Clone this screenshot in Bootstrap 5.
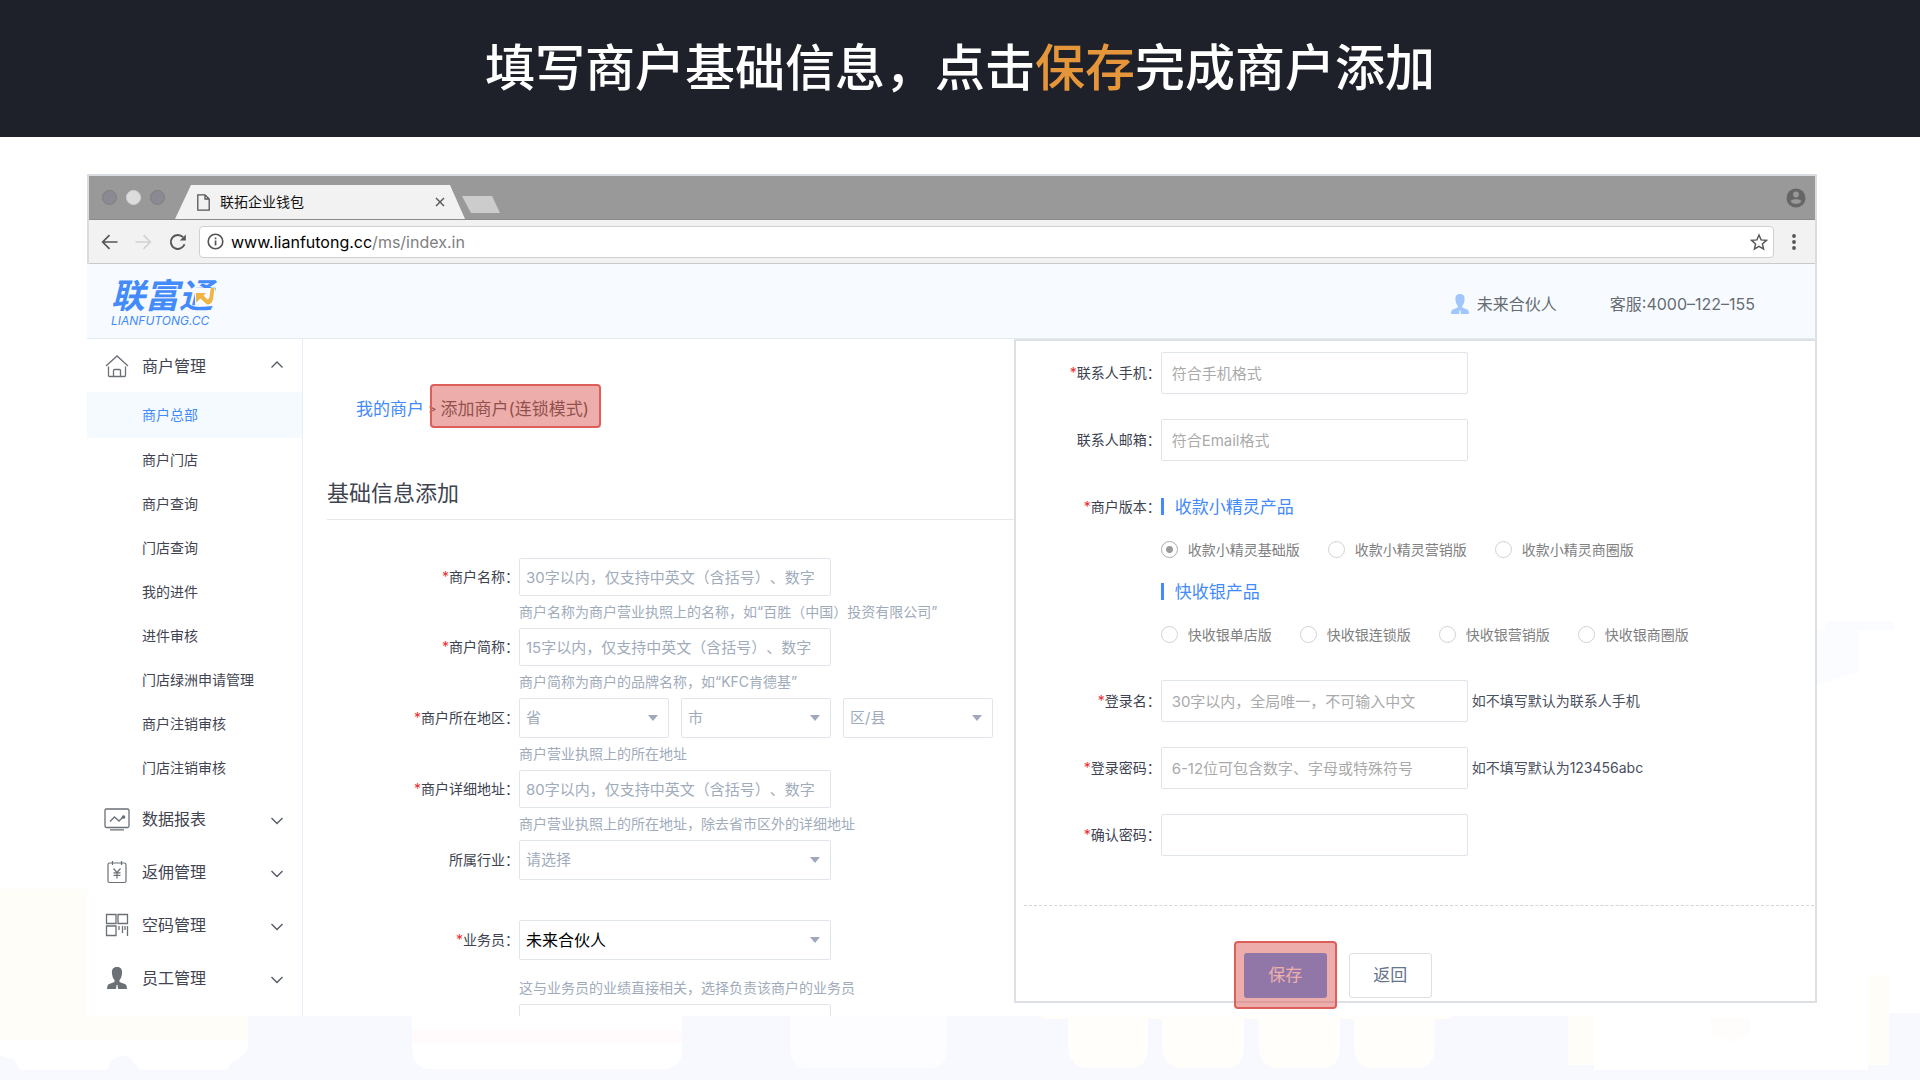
<!DOCTYPE html>
<html lang="zh-CN">
<head>
<meta charset="utf-8">
<meta name="viewport" content="width=device-width, initial-scale=1">
<title>联拓企业钱包</title>
<link href="https://cdn.jsdelivr.net/npm/bootstrap@5.3.0/dist/css/bootstrap.min.css" rel="stylesheet">
<style>
  :root { --brand: #438afa; --line: #e0e4eb; --ink: #3f4450; --hint: #a0abbb; }
  body { font-family: Inter, "Noto Sans CJK SC", sans-serif; font-size: 14px; line-height: 20px; color: var(--ink); background: #fff; text-spacing-trim: space-all; }
  a { text-decoration: none; }
  .backdrop { inset: 0; z-index: -1; }
  .slide-head { height: 137px; padding-bottom: 2px; background: #1f212a; }
  .slide-title { font-size: 50px; line-height: 64px; font-weight: 500; }
  .slide-title em { font-style: normal; color: #e5953a; }

  .browser { margin: 37px 103px 0 87px; }
  .chrome { border: 2px solid #d9dce0; border-bottom: 0; }
  .tabstrip { height: 44px; background: #999; border-bottom: 1px solid #8a8a8a; padding-left: 13px; }
  .lights { gap: 9px; padding-top: 14px; }
  .dot { width: 15px; height: 15px; border-radius: 50%; background: #8b8991; border: 1px solid #7f7e85; }
  .dot-on { background: #dcdcdc; border-color: #d2d2d2; }
  .tab { width: 290px; height: 34px; margin: 9px 0 -1px 10px; background: #f2f2f2; clip-path: polygon(16px 0, 275px 0, 290px 100%, 0 100%); color: #111; padding: 0 20px 0 22px; }
  .tab button { border: 0; background: none; padding: 0; line-height: 0; }
  .tab-name { margin-left: 10px; }
  .newtab { width: 38px; height: 17px; margin: 20px 0 0 -3px; background: #ccc; clip-path: polygon(0 0, 30px 0, 100% 100%, 9px 100%); }
  .toolbar { height: 44px; background: #f2f2f2; border-bottom: 1px solid #c8c9cc; padding: 0 15px 0 12px; }
  .toolbar button { border: 0; background: none; padding: 0; margin-right: 17px; line-height: 0; }
  .toolbar .reload { margin-right: 12px; }
  .addr { height: 32px; background: #fff; border: 1px solid #d0d0d0; border-radius: 4px; padding: 0 5px 0 7px; margin-right: 14px; font-size: 16px; color: #808080; }
  .addr b { font-weight: 400; color: #000; }
  .addr-icon { margin-right: 7px; }

  .apphead { height: 75px; background: #f7fbff; border-bottom: 1px solid #e4ecf3; border-right: 2px solid #dcdfe3; padding: 6px 60px 0 24px; font-size: 16px; color: #666c73; }
  .logo { color: var(--brand); }
  .logo-cn { font-size: 34px; line-height: 34px; font-weight: 700; font-style: italic; }
  .logo-en { font-size: 12px; line-height: 16px; font-style: italic; }
  .logo-arrow { right: -2px; top: 9px; }
  .user { margin-right: 53px; }

  .work { height: calc(100vh - 403px); background: #fff; overflow: visible; }
  .side { width: 216px; flex: none; border-right: 1px solid #e5edf5; overflow: hidden; }
  .grp { height: 53px; padding: 0 19px 0 17px; font-size: 16px; color: var(--ink); }
  .grp-label { margin-left: 12px; }
  .side ul { margin: 0 0 2px; }
  .sub { height: 44px; line-height: 44px; padding-left: 55px; color: var(--ink); }
  .sub.on { height: 46px; line-height: 46px; background: #f5faff; color: var(--brand); }

  .left-pane { flex: 713 1 0; overflow: hidden; }
  .crumbs { margin: 57px 0 0 53px; font-size: 17px; line-height: 26px; color: #444; }
  .crumbs a { color: var(--brand); }
  .crumbs .sep { font-size: 13px; margin: 0 4px; }
  .marked::after { content: ""; position: absolute; inset: var(--mark-inset); background: rgba(219,94,88,.5); border: 2px solid #dc6059; border-radius: 4px; pointer-events: none; }
  .crumbs .marked { --mark-inset: -12px -12px -6px -11px; }
  .sect { margin: 55px 0 38px 24px; padding-bottom: 10px; font-size: 22px; line-height: 32px; font-weight: 400; border-bottom: 1px solid #e8e8e8; }
  .lab { flex: none; text-align: right; color: #3d4250; }
  .lab i { font-style: normal; color: #f02c2c; }
  .left-pane .lab { width: 216px; }
  .fields { width: 312px; gap: 12px; }
  .box { height: 38px; padding: 0 4px 0 6px; border: 1px solid var(--line); border-radius: 2px; font-size: 15px; color: #000; background-color: #fff; }
  .box::placeholder { color: var(--hint); opacity: 1; }
  select.box { height: 40px; color: var(--hint); appearance: none; background: #fff url("data:image/svg+xml,%3Csvg xmlns='http://www.w3.org/2000/svg' viewBox='0 0 10 6'%3E%3Cpath d='M0 0h10L5 6z' fill='%239fa9ba'/%3E%3C/svg%3E") no-repeat right 10px center / 10px 6px; }
  select.box.chosen { color: #000; font-size: 16px; }
  .region { flex: none; width: 150px; }
  .help { margin-left: 216px; height: 32px; line-height: 32px; color: var(--hint); white-space: nowrap; }

  .right-pane { flex: 801 1 0; align-self: flex-start; border: 2px solid #dcdfe3; padding: 11px 1px 3px 0; }
  .right-pane .lab { width: 145px; }
  .right-pane .frow { margin-bottom: 25px; }
  .right-pane .box { width: 307px; height: 42px; padding-left: 10px; }
  .right-pane .box::placeholder { color: #aaa; }
  .pick { height: 42px; }
  .picks { height: 43px; margin-left: 145px; gap: 28px; color: #808080; }
  .picks label { gap: 10px; }
  .picks input { appearance: none; width: 17px; height: 17px; margin: 0; border: 1px solid #d2d2d2; border-radius: 50%; background: #fff; }
  .picks input:checked { border-color: #aaa; background: radial-gradient(circle, #999 0 3px, #fff 4px); }
  .prod { font-size: 17px; font-weight: 400; margin: 0; color: var(--brand); }
  .prod::before { content: ""; width: 3px; height: 17px; background: var(--brand); margin-right: 11px; }
  .side-hint { margin-left: 4px; color: #4a5060; }
  .rule { border-top: 1px dashed #d4d6da; margin: 49px 0 47px 8px; }
  .acts { margin-left: 228px; gap: 22px; }
  .act { width: 83px; height: 45px; border-radius: 3px; font-size: 17px; padding: 0; }
  .act-save, .act-save:hover { background: #478ef8; color: #fff; }
  .act-back { border: 1px solid #dcdfe3; color: #66758a; background: #fff; }
  .acts .marked { --mark-inset: -12px -10px -11px -10px; }
</style>
</head>
<body class="position-relative min-vh-100">

<svg class="backdrop position-absolute w-100 h-100" viewBox="0 0 1920 1080" preserveAspectRatio="none" aria-hidden="true">
  <path d="M0 1013H1920V1080H0Z" fill="#f8f9fe"/>
  <path d="M0 889H248V1040H0Z" fill="#fffdf8"/>
  <path d="M0 1040H248V1048Q246 1056 232 1062L227 1070H140L130 1058 123 1055 112 1060 107 1070H20L14 1059 0 1056Z" fill="#fff"/>
  <path d="M412 1010H682V1050Q682 1068 664 1069H430Q413 1068 412 1050Z" fill="#fff"/>
  <path d="M412 1030H682V1043H412Z" fill="#fffbfc"/>
  <path d="M790 1010H947V1050Q946 1067 930 1068H806Q790 1066 790 1048Z" fill="#fdfdff"/>
  <path d="M1040 1014H1455L1450 1019H1044Z M1068 1018H1148V1050Q1146 1067 1132 1068H1086Q1070 1066 1068 1048Z M1162 1018H1244V1050Q1242 1067 1228 1068H1180Q1164 1066 1162 1048Z M1259 1018H1340V1050Q1338 1067 1324 1068H1276Q1260 1066 1259 1048Z M1354 1018H1435V1050Q1433 1067 1419 1068H1370Q1355 1066 1354 1048Z" fill="#fffefa"/>
  <path d="M1594 1010H1868V1070H1594Z" fill="#fff"/>
  <path d="M1568 1014H1594V1065H1568Z M1868 975H1889V1065H1868Z" fill="#fffdf8"/>
  <path d="M1889 975H1920V1013H1889Z" fill="#fff"/>
  <path d="M1709 1018L1750 1018 1750 1030 1744 1038 1735 1040 1731 1042 1722 1038 1713 1036Z" fill="#fffdfc"/>
  <path d="M1817 630H1858V672L1817 685Z M1826 621H1894V630H1826Z" fill="#fafcff"/>
</svg>

<header class="slide-head d-flex align-items-center justify-content-center">
  <h1 class="slide-title text-white m-0">填写商户基础信息，点击<em>保存</em>完成商户添加</h1>
</header>

<div class="browser">
  <div class="chrome">
    <div class="tabstrip d-flex">
      <div class="lights d-flex"><span class="dot"></span><span class="dot dot-on"></span><span class="dot"></span></div>
      <div class="tab d-flex align-items-center">
        <svg width="13" height="17" viewBox="0 0 13 17" fill="none" stroke="#555" stroke-width="1.3"><path d="M.8.8H8L12.2 5V16.2H.8ZM8 .8V5h4.2"/></svg>
        <span class="tab-name">联拓企业钱包</span>
        <button type="button" class="ms-auto" aria-label="关闭标签页"><svg width="10" height="10" viewBox="0 0 10 10" stroke="#555" stroke-width="1.4"><path d="M1 1l8 8M9 1L1 9"/></svg></button>
      </div>
      <div class="newtab"></div>
      <svg class="ms-auto align-self-center me-2" width="22" height="20" viewBox="0 0 22 20"><circle cx="11" cy="10" r="9.5" fill="#666"/><circle cx="11" cy="6.5" r="2.9" fill="#999"/><path d="M5.5 13.2C7 10.7 15 10.7 16.5 13.2 15 16.6 7 16.6 5.5 13.2Z" fill="#999"/></svg>
    </div>
    <div class="toolbar d-flex align-items-center">
      <button type="button" aria-label="后退"><svg width="17" height="16" viewBox="0 0 17 16" fill="none" stroke="#555" stroke-width="1.7"><path d="M16.5 8H2M8.5 1.2L1.7 8l6.8 6.8"/></svg></button>
      <button type="button" aria-label="前进"><svg width="17" height="16" viewBox="0 0 17 16" fill="none" stroke="#d2d2d2" stroke-width="1.7"><path d="M.5 8H15M8.5 1.2L15.3 8l-6.8 6.8"/></svg></button>
      <button type="button" class="reload" aria-label="刷新"><svg width="18" height="18" viewBox="0 0 18 18"><path d="M15.5 11.2A7 7 0 1 1 14 4.2" fill="none" stroke="#555" stroke-width="1.9"/><path d="M16.8 1.5V7.5H10.8Z" fill="#555"/></svg></button>
      <div class="addr flex-grow-1 d-flex align-items-center">
        <svg class="addr-icon" width="17" height="17" viewBox="0 0 17 17"><circle cx="8.5" cy="8.5" r="7.3" fill="none" stroke="#555" stroke-width="1.6"/><path d="M7.7 7.5h1.7v5H7.7zM7.7 4.5h1.7v1.7H7.7z" fill="#555"/></svg>
        <span><b>www.lianfutong.cc</b>/ms/index.in</span>
        <svg class="ms-auto" width="18" height="18" viewBox="0 0 18 18" fill="none" stroke="#555" stroke-width="1.4"><path d="M9 2l2.1 4.9 5.3.5-4 3.5 1.2 5.2L9 13.3l-4.600 2.800 1.200-5.200-4-3.500 5.300-.5z"/></svg>
      </div>
      <svg width="12" height="18" viewBox="0 0 12 18" fill="#555"><circle cx="6" cy="3" r="1.9"/><circle cx="6" cy="9" r="1.9"/><circle cx="6" cy="15" r="1.9"/></svg>
    </div>
  </div>

  <div class="apphead d-flex align-items-center">
    <a href="#" class="logo position-relative d-flex flex-column">
      <span class="logo-cn">联富通</span>
      <span class="logo-en">LIANFUTONG.CC</span>
      <svg class="logo-arrow position-absolute" width="20" height="18" viewBox="0 0 20 18"><path d="M0 0h20v18H0z" fill="#f7fbff"/><path d="M1 5h10L8.5 7.5 12.5 11.5Q14.2 11 14.5 9L15.8 0H19.5L18 11Q17 16.5 12 16.5L5.5 10.5 1 14.5Z" fill="#eeb444"/></svg>
    </a>
    <span class="user ms-auto d-flex align-items-center">
      <svg class="me-2" width="18" height="20" viewBox="0 0 20 22" fill="#a0c6fb"><path d="M10 0c4 0 5.5 2.5 5 6.5-.2 2.5-1 5-2.5 6.5v2l6 2.3Q20 18.5 20 22H11l-.5-4h-1L9 22H0q0-3.5 1.5-4.7l6-2.3v-2C6 11.5 5.2 9 5 6.5 4.5 2.5 6 0 10 0z"/></svg>
      未来合伙人
    </span>
    <span>客服:4000–122–155</span>
  </div>

  <div class="work d-flex">
    <nav class="side">
      <a href="#" class="grp d-flex align-items-center">
        <svg width="26" height="24" viewBox="0 0 26 24" fill="none" stroke="#6b7077" stroke-width="1.3"><path d="M2 12L13 2l11 10M4.5 12.5V21.5q0 1 1 1H20.5q1 0 1-1V12.5M9.500 22.500V16.500q0-1 1-1h5q1 0 1 1v6"/></svg>
        <span class="grp-label">商户管理</span>
        <svg class="ms-auto" width="12" height="12" viewBox="0 0 12 12" fill="none" stroke="#555a63" stroke-width="1.4"><path d="M.5 7.5L6 2l5.5 5.5"/></svg>
      </a>
      <ul class="list-unstyled">
        <li><a href="#" class="sub on d-block">商户总部</a></li>
        <li><a href="#" class="sub d-block">商户门店</a></li>
        <li><a href="#" class="sub d-block">商户查询</a></li>
        <li><a href="#" class="sub d-block">门店查询</a></li>
        <li><a href="#" class="sub d-block">我的进件</a></li>
        <li><a href="#" class="sub d-block">进件审核</a></li>
        <li><a href="#" class="sub d-block">门店绿洲申请管理</a></li>
        <li><a href="#" class="sub d-block">商户注销审核</a></li>
        <li><a href="#" class="sub d-block">门店注销审核</a></li>
      </ul>
      <a href="#" class="grp d-flex align-items-center">
        <svg width="26" height="24" viewBox="0 0 26 24" fill="none" stroke="#6b7077" stroke-width="1.3"><rect x="1" y="2" width="24" height="18.5" rx="1.5"/><path d="M6 14.5l4.5-4.5 4.5 4 4.5-4.5M6 22.800h14"/><circle cx="19.5" cy="10" r="1.2" fill="#6b7077"/></svg>
        <span class="grp-label">数据报表</span>
        <svg class="ms-auto" width="12" height="12" viewBox="0 0 12 12" fill="none" stroke="#555a63" stroke-width="1.4"><path d="M.5 5L6 10.5 11.5 5"/></svg>
      </a>
      <a href="#" class="grp d-flex align-items-center">
        <svg width="26" height="24" viewBox="0 0 26 24" fill="none" stroke="#6b7077" stroke-width="1.2"><rect x="4" y="3" width="18" height="19.5" rx="1.5"/><path d="M8.5 1v4M17.5 1v4M9.5 8.5L13 12.5l3.5-4M13 12.5V18.5M9.5 12.8h7M9.5 15.3h7"/></svg>
        <span class="grp-label">返佣管理</span>
        <svg class="ms-auto" width="12" height="12" viewBox="0 0 12 12" fill="none" stroke="#555a63" stroke-width="1.4"><path d="M.5 5L6 10.5 11.5 5"/></svg>
      </a>
      <a href="#" class="grp d-flex align-items-center">
        <svg width="26" height="24" viewBox="0 0 26 24" fill="none" stroke="#6b7077" stroke-width="1.3"><path d="M2.500 1.500h9.500V10.500H2.500zM14 1.500H23.500V10.500H14zM2.500 13h9.500v9.500H2.500zM15 13v4M18.500 13v7M23.500 13v10M21 13v4"/></svg>
        <span class="grp-label">空码管理</span>
        <svg class="ms-auto" width="12" height="12" viewBox="0 0 12 12" fill="none" stroke="#555a63" stroke-width="1.4"><path d="M.5 5L6 10.5 11.5 5"/></svg>
      </a>
      <a href="#" class="grp d-flex align-items-center">
        <svg width="26" height="22" viewBox="-3 0 26 22" fill="#6b7077"><path d="M10 0c4 0 5.5 2.5 5 6.5-.2 2.5-1 5-2.5 6.5v2l6 2.3Q20 18.5 20 22H11l-.5-4h-1L9 22H0q0-3.5 1.5-4.7l6-2.3v-2C6 11.5 5.2 9 5 6.5 4.5 2.5 6 0 10 0z"/></svg>
        <span class="grp-label">员工管理</span>
        <svg class="ms-auto" width="12" height="12" viewBox="0 0 12 12" fill="none" stroke="#555a63" stroke-width="1.4"><path d="M.5 5L6 10.5 11.5 5"/></svg>
      </a>
    </nav>

    <section class="left-pane">
      <div class="crumbs d-flex"><a href="#">我的商户</a><span class="sep">&gt;</span><span class="marked position-relative">添加商户(连锁模式)</span></div>
      <h2 class="sect">基础信息添加</h2>
      <form>
        <div class="d-flex align-items-center">
          <label class="lab" for="mname"><i>*</i>商户名称：</label>
          <div class="fields d-flex"><input id="mname" class="box w-100" type="text" placeholder="30字以内，仅支持中英文（含括号）、数字"></div>
        </div>
        <div class="help">商户名称为商户营业执照上的名称，如“百胜（中国）投资有限公司”</div>
        <div class="d-flex align-items-center">
          <label class="lab" for="mshort"><i>*</i>商户简称：</label>
          <div class="fields d-flex"><input id="mshort" class="box w-100" type="text" placeholder="15字以内，仅支持中英文（含括号）、数字"></div>
        </div>
        <div class="help">商户简称为商户的品牌名称，如“KFC肯德基”</div>
        <div class="d-flex align-items-center">
          <label class="lab" for="prov"><i>*</i>商户所在地区：</label>
          <div class="fields d-flex">
            <select id="prov" class="box region"><option>省</option></select>
            <select class="box region" aria-label="市"><option>市</option></select>
            <select class="box region" aria-label="区/县"><option>区/县</option></select>
          </div>
        </div>
        <div class="help">商户营业执照上的所在地址</div>
        <div class="d-flex align-items-center">
          <label class="lab" for="maddr"><i>*</i>商户详细地址：</label>
          <div class="fields d-flex"><input id="maddr" class="box w-100" type="text" placeholder="80字以内，仅支持中英文（含括号）、数字"></div>
        </div>
        <div class="help">商户营业执照上的所在地址，除去省市区外的详细地址</div>
        <div class="d-flex align-items-center">
          <label class="lab" for="trade">所属行业：</label>
          <div class="fields d-flex"><select id="trade" class="box w-100"><option>请选择</option></select></div>
        </div>
        <div class="d-flex align-items-center mt-4 pt-3">
          <label class="lab" for="staff"><i>*</i>业务员：</label>
          <div class="fields d-flex"><select id="staff" class="box w-100 chosen"><option>未来合伙人</option></select></div>
        </div>
        <div class="help mt-2 pt-1 h-auto">这与业务员的业绩直接相关，选择负责该商户的业务员</div>
        <div class="d-flex">
          <span class="lab"></span>
          <div class="fields d-flex"><input class="box w-100" type="text" aria-label="备注"></div>
        </div>
      </form>
    </section>

    <section class="right-pane">
      <form>
        <div class="frow d-flex align-items-center">
          <label class="lab" for="tel"><i>*</i>联系人手机：</label>
          <input id="tel" class="box" type="tel" placeholder="符合手机格式">
        </div>
        <div class="frow d-flex align-items-center">
          <label class="lab" for="mail">联系人邮箱：</label>
          <input id="mail" class="box" type="email" placeholder="符合Email格式">
        </div>
        <div class="pick d-flex align-items-center">
          <span class="lab"><i>*</i>商户版本：</span>
          <h3 class="prod d-flex align-items-center">收款小精灵产品</h3>
        </div>
        <div class="picks d-flex">
          <label class="d-flex align-items-center"><input type="radio" name="ver" checked>收款小精灵基础版</label>
          <label class="d-flex align-items-center"><input type="radio" name="ver">收款小精灵营销版</label>
          <label class="d-flex align-items-center"><input type="radio" name="ver">收款小精灵商圈版</label>
        </div>
        <div class="pick d-flex align-items-center">
          <span class="lab"></span>
          <h3 class="prod d-flex align-items-center">快收银产品</h3>
        </div>
        <div class="picks d-flex mb-4">
          <label class="d-flex align-items-center"><input type="radio" name="ver">快收银单店版</label>
          <label class="d-flex align-items-center"><input type="radio" name="ver">快收银连锁版</label>
          <label class="d-flex align-items-center"><input type="radio" name="ver">快收银营销版</label>
          <label class="d-flex align-items-center"><input type="radio" name="ver">快收银商圈版</label>
        </div>
        <div class="frow d-flex align-items-center">
          <label class="lab" for="login"><i>*</i>登录名：</label>
          <input id="login" class="box" type="text" placeholder="30字以内，全局唯一，不可输入中文">
          <span class="side-hint">如不填写默认为联系人手机</span>
        </div>
        <div class="frow d-flex align-items-center">
          <label class="lab" for="pw"><i>*</i>登录密码：</label>
          <input id="pw" class="box" type="password" placeholder="6-12位可包含数字、字母或特殊符号">
          <span class="side-hint">如不填写默认为123456abc</span>
        </div>
        <div class="frow d-flex align-items-center">
          <label class="lab" for="pw2"><i>*</i>确认密码：</label>
          <input id="pw2" class="box" type="password">
        </div>
        <div class="rule"></div>
        <div class="acts d-flex">
          <div class="marked position-relative"><button type="button" class="btn act act-save">保存</button></div>
          <button type="button" class="btn act act-back">返回</button>
        </div>
      </form>
    </section>
  </div>
</div>
<script src="https://cdn.jsdelivr.net/npm/bootstrap@5.3.0/dist/js/bootstrap.bundle.min.js"></script>
</body>
</html>
